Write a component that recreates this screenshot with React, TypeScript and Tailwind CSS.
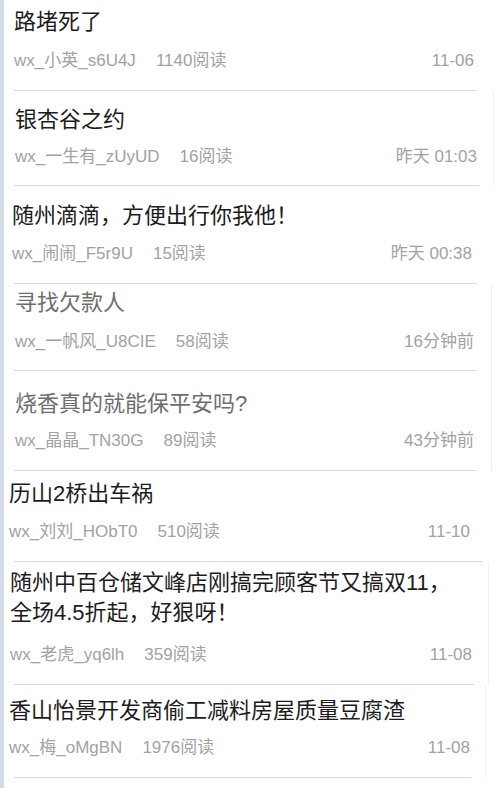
import React from 'react'

type Post = {
  title: React.ReactNode
  author: string
  reads: number
  time: string
  muted?: boolean
  // each row came from a slightly different screenshot, so offsets vary
  box: string
  meta: string
  edge: string
}

const posts: Post[] = [
  {
    title: '路堵死了',
    author: 'wx_小英_s6U4J',
    reads: 1140,
    time: '11-06',
    box: 'pt-[7px] pb-[18px] pl-[10px] pr-[17px]',
    meta: 'mt-[13px]',
    edge: 'mr-[10px] border-transparent',
  },
  {
    title: '银杏谷之约',
    author: 'wx_一生有_zUyUD',
    reads: 16,
    time: '昨天 01:03',
    box: 'pt-[14px] pb-[17px] pl-[11px] pr-[16px]',
    meta: 'mt-[11px]',
    edge: 'mr-[8px] border-[#efefef]',
  },
  {
    title: '随州滴滴，方便出行你我他！',
    author: 'wx_闹闹_F5r9U',
    reads: 15,
    time: '昨天 00:38',
    box: 'pt-[15px] pb-[18px] pl-[8px] pr-[19px]',
    meta: 'mt-[12px]',
    edge: 'mr-[10px] border-transparent',
  },
  {
    title: '寻找欠款人',
    author: 'wx_一帆风_U8CIE',
    reads: 58,
    time: '16分钟前',
    muted: true,
    box: 'pt-[4px] pb-[17px] pl-[11px] pr-[17px]',
    meta: 'mt-[13px]',
    edge: 'mr-[10px] border-[#efefef]',
  },
  {
    title: '烧香真的就能保平安吗?',
    author: 'wx_晶晶_TN30G',
    reads: 89,
    time: '43分钟前',
    muted: true,
    box: 'pt-[18px] pb-[18px] pl-[11px] pr-[17px]',
    meta: 'mt-[11px]',
    edge: 'mr-[10px] border-[#efefef]',
  },
  {
    title: '历山2桥出车祸',
    author: 'wx_刘刘_HObT0',
    reads: 510,
    time: '11-10',
    box: 'pt-[8px] pb-[18px] pl-[5px] pr-[27px]',
    meta: 'mt-[12px]',
    edge: 'mr-[4px] border-transparent',
  },
  {
    title: (
      <>
        随州中百仓储文峰店刚搞完顾客节又搞双11，
        <br />
        全场4.5折起，好狠呀！
      </>
    ),
    author: 'wx_老虎_yq6lh',
    reads: 359,
    time: '11-08',
    box: 'pt-[6px] pb-[18px] pl-[6px] pr-[16px]',
    meta: 'mt-[16px]',
    edge: 'mr-[13px] border-[#efefef]',
  },
  {
    title: '香山怡景开发商偷工减料房屋质量豆腐渣',
    author: 'wx_梅_oMgBN',
    reads: 1976,
    time: '11-08',
    box: 'pt-[11px] pb-[18px] pl-[5px] pr-[15px]',
    meta: 'mt-[11px]',
    edge: 'mr-[16px] border-[#efefef]',
  },
]

const PostRow = ({ post }: { post: Post }) => (
  <div className={`border-r ${post.edge}`}>
    <div className={post.box}>
      <div
        className={`text-[22px] leading-[30px] ${
          post.muted ? 'text-[#6e6e6e]' : 'text-[#1c1c1c]'
        }`}
      >
        {post.title}
      </div>
      <div
        className={`${post.meta} flex items-center justify-between text-[17px] leading-[22px] text-[#a2a2a2]`}
      >
        <div className="flex gap-[20px]">
          <span>{post.author}</span>
          <span>{post.reads}阅读</span>
        </div>
        <span>{post.time}</span>
      </div>
    </div>
    <div className="h-px bg-[#dadada] ml-[10px] mr-[14px]" />
  </div>
)

export default function App() {
  return (
    <div
      className="flex w-[502px] h-[788px] overflow-hidden bg-white"
      style={{ fontFamily: '"Liberation Sans", "Noto Sans CJK SC", sans-serif' }}
    >
      <div className="w-[4px] shrink-0 bg-[#d4dbe7]" />
      <div className="flex-1 flex flex-col">
        {posts.map((p, i) => (
          <PostRow key={i} post={p} />
        ))}
      </div>
    </div>
  )
}
